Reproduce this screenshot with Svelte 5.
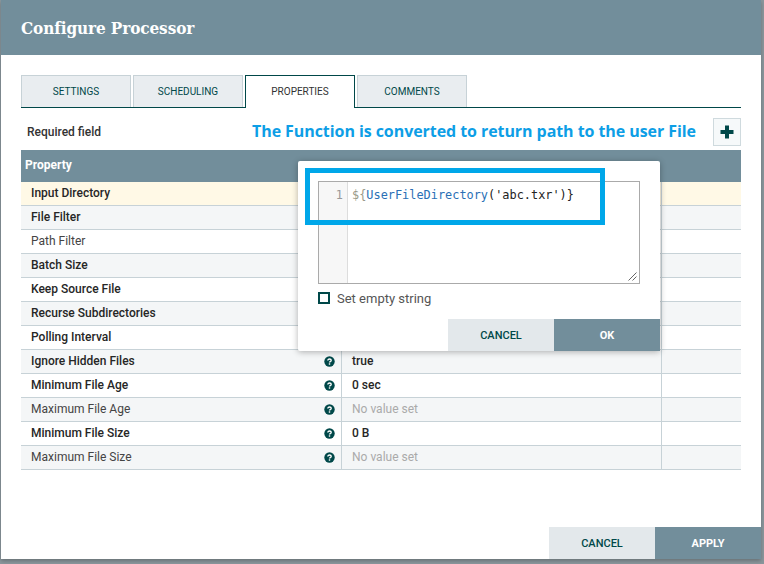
<script lang="ts">
	const tabs = ['Settings', 'Scheduling', 'Properties', 'Comments'];
	const rows = [
		{ name: 'Input Directory', req: true, active: true },
		{ name: 'File Filter', req: true },
		{ name: 'Path Filter', req: false },
		{ name: 'Batch Size', req: true },
		{ name: 'Keep Source File', req: true },
		{ name: 'Recurse Subdirectories', req: true },
		{ name: 'Polling Interval', req: true },
		{ name: 'Ignore Hidden Files', req: true, value: 'true', help: true },
		{ name: 'Minimum File Age', req: true, value: '0 sec', help: true },
		{ name: 'Maximum File Age', req: false, help: true },
		{ name: 'Minimum File Size', req: true, value: '0 B', help: true },
		{ name: 'Maximum File Size', req: false, help: true }
	];
</script>

<div class="backdrop">
	<div class="dialog">
		<header>Configure Processor</header>

		<div class="body">
			<nav class="tabs">
				{#each tabs as tab}
					<div class="tab" class:current={tab === 'Properties'}>{tab}</div>
				{/each}
			</nav>

			<div class="toolbar">
				<span class="required">Required field</span>
				<span class="note">The Function is converted to return path to the user File</span>
				<button class="add" aria-label="Add property">
					<svg width="14" height="14" viewBox="0 0 14 14"><path d="M5 0.500h4v4.500h4.500v4H9v4.500H5V9H0.500V5H5z" fill="#004849" /></svg>
				</button>
			</div>

			<div class="table">
				<div class="head">Property</div>
				{#each rows as row, i}
					<div class="row" class:odd={i % 2 === 1} class:active={row.active}>
						<div class="name" class:req={row.req}>
							<span>{row.name}</span>
							{#if row.help}
								<svg class="help" width="11" height="11" viewBox="0 0 11 11">
									<circle cx="5.500" cy="5.500" r="5.200" fill="#004849" />
									<path d="M3.800 4.500q0-1.500 1.700-1.500t1.700 1.400q0 .8-.9 1.200-.8.300-.8.900" fill="none" stroke="#fff" stroke-width="1.300" />
									<rect x="4.800" y="7.300" width="1.400" height="1.400" fill="#fff" />
								</svg>
							{/if}
						</div>
						<div class="value" class:unset={!row.value}>{row.help ? (row.value ?? 'No value set') : ''}</div>
						<div class="actions"></div>
					</div>
				{/each}
			</div>
		</div>

		<footer>
			<button class="btn neutral">CANCEL</button>
			<button class="btn primary">APPLY</button>
		</footer>

		<div class="popup">
			<div class="editor">
				<div class="gutter">1</div>
				<div class="code">
					<span class="c-delim">$&#123;</span><span class="c-fn">UserFileDirectory</span>('abc.txr')&#125;
				</div>
				<svg class="grip" width="9" height="9" viewBox="0 0 9 9"><path d="M0.500 8.500L8.500 0.500M4.500 8.500L8.500 4.500" stroke="#666" stroke-width="1" fill="none" /></svg>
			</div>
			<label class="empty"><span class="check"></span>Set empty string</label>
			<div class="popup-actions">
				<button class="btn neutral">CANCEL</button>
				<button class="btn primary">OK</button>
			</div>
		</div>

		<div class="highlight"></div>
	</div>
</div>

<style>
	:global(body) {
		background: #7b8a90;
		font-family: Roboto, 'Liberation Sans', sans-serif;
	}
	.backdrop {
		width: 764px;
		height: 564px;
		overflow: hidden;
		padding-left: 1px;
		box-sizing: border-box;
		background: #8b979d;
	}
	.dialog {
		position: relative;
		width: 760px;
		height: 559px;
		background: #fff;
		display: flex;
		flex-direction: column;
		box-shadow: 0 2px 4px rgba(0, 0, 0, 0.25);
	}
	header {
		height: 55px;
		flex: none;
		box-sizing: border-box;
		background: #728e9b;
		color: #fff;
		font-family: 'DejaVu Serif Condensed', 'DejaVu Serif', serif;
		font-weight: 700;
		font-size: 17px;
		letter-spacing: -0.1px;
		line-height: 55px;
		padding: 1px 0 0 20px;
	}
	.body {
		flex: 1;
		padding: 20px 20px 0;
	}
	.tabs {
		display: flex;
		gap: 2px;
		height: 33px;
		box-sizing: border-box;
		border-bottom: 1px solid #004849;
	}
	.tab {
		width: 110px;
		height: 32px;
		box-sizing: border-box;
		background: #e9edf0;
		border: 1px solid #c7d2d7;
		border-bottom: none;
		color: #004849;
		font-size: 10px;
		font-weight: 400;
		text-transform: uppercase;
		text-align: center;
		line-height: 31px;
	}
	.tab.current {
		height: 33px;
		background: #fff;
		border: 1px solid #004849;
		border-bottom: none;
		color: #333;
	}
	.toolbar {
		display: flex;
		align-items: center;
		height: 42px;
		box-sizing: border-box;
		padding: 6px 0 0 6px;
	}
	.required {
		width: 225px;
		font-size: 12px;
		font-weight: 500;
		color: #333;
	}
	.note {
		flex: 1;
		margin-bottom: 2px;
		font-family: 'Open Sans', sans-serif;
		font-size: 16px;
		font-weight: 700;
		letter-spacing: -0.07px;
		color: #0d9ee6;
		white-space: nowrap;
	}
	.add {
		width: 28px;
		height: 28px;
		padding: 0;
		display: flex;
		align-items: center;
		justify-content: center;
		background: #f6f9fa;
		border: 1px solid #cfdade;
	}
	.table {
		font-size: 12px;
	}
	.head {
		height: 32px;
		background: #728e9b;
		color: #fff;
		font-size: 12px;
		font-weight: 700;
		line-height: 31px;
		padding-left: 4px;
	}
	.row {
		display: flex;
		height: 24px;
		box-sizing: border-box;
		border-bottom: 1px solid #c7d2d7;
		background: #fff;
		line-height: 22px;
	}
	.row.odd {
		background: #f4f6f7;
	}
	.row.active {
		background: #fff9e6;
	}
	.name {
		width: 321px;
		box-sizing: border-box;
		padding: 0 6px 0 10px;
		display: flex;
		align-items: center;
		justify-content: space-between;
		color: #444;
		border-right: 1px solid #c7d2d7;
	}
	.name span {
		margin-bottom: 2px;
	}
	.name.req {
		color: #262626;
		font-weight: 500;
	}
	.help {
		margin-bottom: 1px;
	}
	.value {
		width: 320px;
		box-sizing: border-box;
		padding-left: 10px;
		font-weight: 500;
		color: #262626;
		border-right: 1px solid #c7d2d7;
	}
	.value.unset {
		color: #aaa;
		font-weight: 400;
	}
	.actions {
		flex: 1;
	}
	.btn {
		width: 106px;
		height: 32px;
		border: none;
		padding: 0;
		font-family: inherit;
		font-size: 11px;
		font-weight: 500;
	}
	.btn.neutral {
		background: #e3e8eb;
		color: #004849;
	}
	.btn.primary {
		background: #728e9b;
		color: #fff;
		font-weight: 700;
	}
	footer {
		display: flex;
		justify-content: flex-end;
		flex: none;
	}
	.popup {
		position: absolute;
		left: 297px;
		top: 161px;
		width: 362px;
		height: 190px;
		box-sizing: border-box;
		background: #fff;
		border-radius: 2px;
		box-shadow: 0 1px 6px rgba(0, 0, 0, 0.3);
		padding: 20px 20px 0;
		display: flex;
		flex-direction: column;
	}
	.editor {
		position: relative;
		display: flex;
		height: 103px;
		flex: none;
		box-sizing: border-box;
		border: 1px solid #aaa;
		font-family: 'DejaVu Sans Mono', monospace;
		font-size: 11.900px;
		line-height: 26px;
	}
	.gutter {
		width: 29px;
		flex: none;
		box-sizing: border-box;
		background: #f7f7f7;
		border-right: 1px solid #ddd;
		color: #999;
		text-align: right;
		padding-right: 4px;
	}
	.code {
		padding-left: 4px;
		color: #222;
		white-space: nowrap;
	}
	.c-delim {
		color: #998;
	}
	.c-fn {
		color: #2a6fb5;
	}
	.grip {
		position: absolute;
		right: 2px;
		bottom: 2px;
	}
	.empty {
		display: flex;
		align-items: center;
		gap: 7px;
		margin-top: 8px;
		height: 12px;
		font-size: 13px;
		color: #555;
	}
	.check {
		width: 12px;
		height: 12px;
		box-sizing: border-box;
		border: 2px solid #004849;
	}
	.popup-actions {
		display: flex;
		justify-content: flex-end;
		margin: auto -20px 0 0;
	}
	.highlight {
		position: absolute;
		left: 304px;
		top: 168px;
		width: 300px;
		height: 57px;
		box-sizing: border-box;
		border: 5px solid #00a7e9;
	}
</style>
